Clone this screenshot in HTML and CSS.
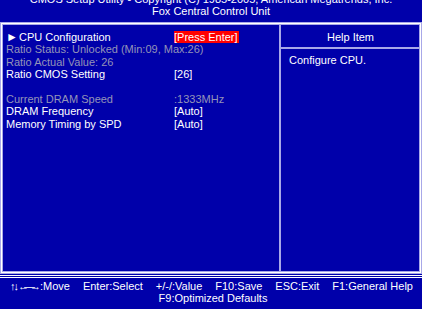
FILE: index.html
```html
<!DOCTYPE html>
<html>
  <head>
    <title>Fox Central Control Unit</title>
    <link rel="stylesheet" href="styles.css">
  </head>
  <body>
    <div class="titulo">
      <div>CMOS Setup Utility - Copyright (C) 1985-2005, American Megatrends, Inc.</div>
      <div>Fox Central Control Unit</div>
    </div>

    <div class="caja">
      <div class="izq">
        <div class="fila"><span class="nombre"><span class="flecha">&#9658;</span>CPU Configuration</span><span class="valor"><span class="activo">[Press Enter]</span></span></div>
        <div class="fila gris"><span>Ratio Status: Unlocked (Min:09, Max:26)</span></div>
        <div class="fila gris"><span>Ratio Actual Value: 26</span></div>
        <div class="fila"><span class="nombre">Ratio CMOS Setting</span><span class="valor">[26]</span></div>
        <div class="fila"></div>
        <div class="fila gris"><span class="nombre">Current DRAM Speed</span><span class="valor">:1333MHz</span></div>
        <div class="fila"><span class="nombre">DRAM Frequency</span><span class="valor">[Auto]</span></div>
        <div class="fila"><span class="nombre">Memory Timing by SPD</span><span class="valor">[Auto]</span></div>
      </div>
      <div class="der">
        <div class="ayuda-titulo">Help Item</div>
        <div class="ayuda-texto">Configure CPU.</div>
      </div>
    </div>

    <div class="pie">
      <div class="teclas">
        <span><span class="flechas">&#8593;&#8595;</span><span class="flechas largas">&#8592;&#8212;&#8594;</span>:Move</span>
        <span>Enter:Select</span>
        <span>+/-/:Value</span>
        <span>F10:Save</span>
        <span>ESC:Exit</span>
        <span>F1:General Help</span>
      </div>
      <div class="extra">F9:Optimized Defaults</div>
    </div>
  </body>
</html>
```

FILE: styles.css
```css
body {
  margin: 0;
  background-color: #0000aa;
  color: #ffffff;
  font-family: "Liberation Sans", Arial, sans-serif;
  font-size: 11px;
  line-height: 12px;
  overflow: hidden;
}
.titulo {
  margin-top: -7px;
  text-align: center;
  white-space: nowrap;
}
.caja {
  display: flex;
  margin: 6px 1px 0 1px;
  height: 248px;
  border: 1px solid #ffffff;
  outline: 1px solid #a8a8e8;
  box-shadow: inset 0 0 0 1px #a8a8e8;
}
.izq {
  width: 279px;
  padding: 7px 0 0 4px;
  box-sizing: border-box;
  border-right: 2px solid #a8a8e8;
}
.der {
  flex: 1;
}
.fila {
  display: flex;
  height: 12.4px;
  white-space: nowrap;
}
.nombre {
  width: 168px;
}
.flecha {
  display: inline-block;
  width: 13px;
  font-size: 12px;
  line-height: 12px;
}
.gris {
  color: #9494b8;
}
.activo {
  background-color: #ff0000;
  padding: 0 1px 0 0;
}
.ayuda-titulo {
  height: 25px;
  padding-top: 7px;
  box-sizing: border-box;
  text-align: center;
  border-bottom: 2px solid #a8a8e8;
}
.ayuda-texto {
  padding: 5px 0 0 8px;
}
.pie {
  margin-top: 2px;
  border-top: 3px double #ffffff;
  padding-top: 2px;
}
.teclas {
  display: flex;
  justify-content: space-between;
  padding: 0 9px 0 10px;
  white-space: nowrap;
}
.flechas {
  letter-spacing: -2px;
}
.largas {
  letter-spacing: -5px;
  margin-left: 1px;
  margin-right: 4px;
}
.extra {
  text-align: center;
  padding-left: 4px;
}
```
